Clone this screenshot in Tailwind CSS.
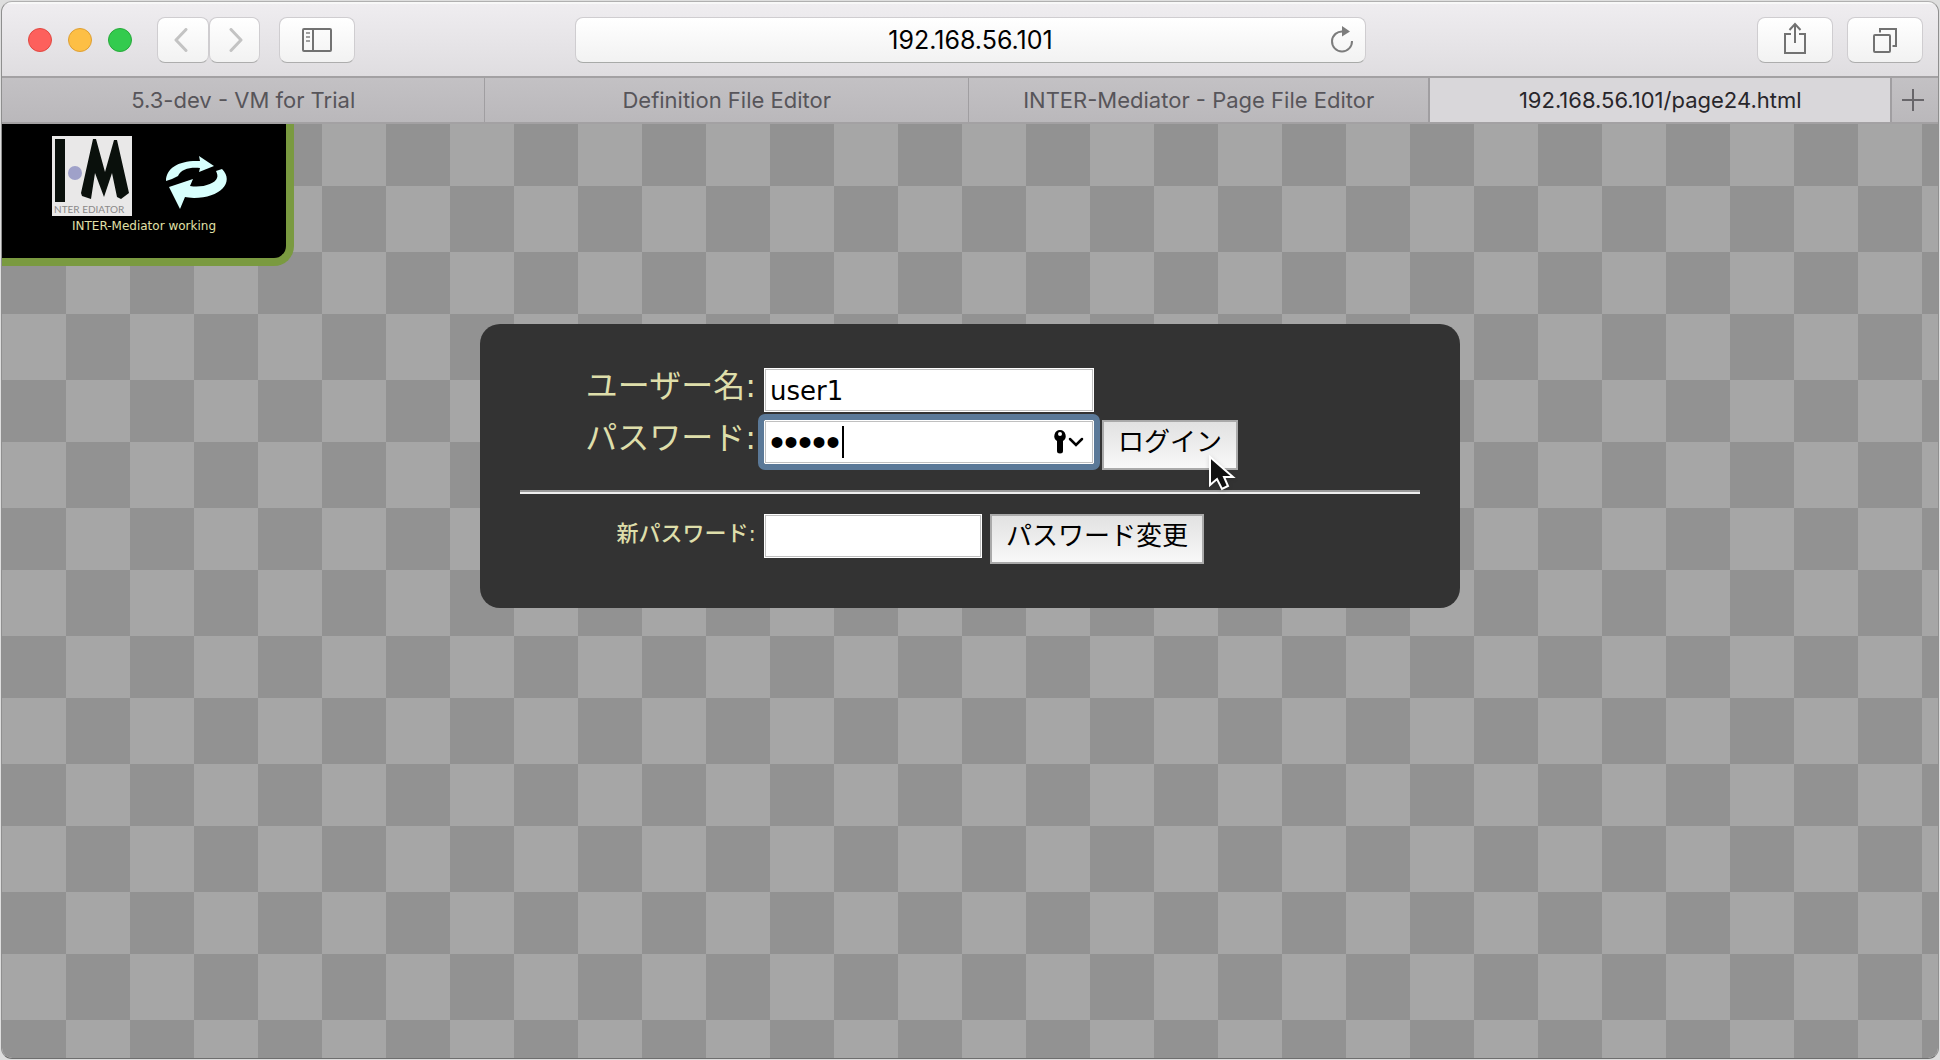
<!DOCTYPE html>
<html lang="ja">
<head>
<meta charset="utf-8">
<title>192.168.56.101/page24.html</title>
<script src="https://cdn.jsdelivr.net/npm/@tailwindcss/browser@4"></script>
</head>
<body class="min-h-screen bg-[#dedede] flex flex-col pt-px px-px pb-px">
<div class="flex-1 flex flex-col rounded-[11px] overflow-hidden border border-[#b0b0b0] border-b-[#6e6e6e] border-x-[#8f8f8f] font-['Inter',sans-serif]">

  <header class="h-[74px] border-t-2 border-[#f8f8f8] bg-linear-to-b from-[#efedf0] to-[#dfdde0] grid grid-cols-[573fr_791fr_572fr] items-center">
    <div class="flex items-center pl-[26px]">
      <div class="flex gap-4">
        <span class="size-6 rounded-full bg-[#fd605c] border border-[#e14841]"></span>
        <span class="size-6 rounded-full bg-[#fdbf45] border border-[#de9f34]"></span>
        <span class="size-6 rounded-full bg-[#33cb4e] border border-[#27a93a]"></span>
      </div>
      <div class="flex ml-[25px]">
        <button aria-label="戻る" class="w-[52px] h-[46px] rounded-lg border border-[#cfcdd0] border-b-[#adadad] bg-linear-to-b from-white to-[#f2f2f2] grid place-items-center">
          <svg class="w-4 h-6 mr-1" viewBox="0 0 16 24" fill="none" stroke="#c3c3c3" stroke-width="3" stroke-linecap="round" stroke-linejoin="round"><path d="M13 1.500 3 12l10 10.500"/></svg>
        </button>
        <button aria-label="進む" class="w-[51px] h-[46px] rounded-lg border border-[#cfcdd0] border-b-[#adadad] bg-linear-to-b from-white to-[#f2f2f2] grid place-items-center">
          <svg class="w-4 h-6" viewBox="0 0 16 24" fill="none" stroke="#c3c3c3" stroke-width="3" stroke-linecap="round" stroke-linejoin="round"><path d="M4 1.500 14 12 4 22.500"/></svg>
        </button>
      </div>
      <button aria-label="サイドバー" class="ml-[19px] w-[76px] h-[46px] rounded-lg border border-[#cfcdd0] border-b-[#adadad] bg-linear-to-b from-white to-[#f2f2f2] grid place-items-center">
        <svg class="w-[30px] h-6" viewBox="0 0 30 24" fill="none" stroke="#727272" stroke-width="2"><rect x="1" y="1" width="28" height="22" rx="1"/><path d="M11 1v22"/><path stroke="#a0a0a0" d="M4 5h4M4 9h4M4 13h4"/></svg>
      </button>
    </div>
    <div class="relative">
      <input type="text" aria-label="アドレス" value="192.168.56.101" class="block w-full h-[46px] rounded-lg border border-[#cfcdd0] border-b-[#a8aaa8] bg-linear-to-b from-white to-[#f2f2f2] text-center text-[25px] text-black outline-none">
      <button aria-label="再読み込み" class="absolute right-3 top-2"><svg class="w-6 h-7" viewBox="0 0 24 28" fill="none" stroke="#7c7c7c" stroke-width="2"><path d="M13 6.500A10 10 0 1 0 22 16"/><path d="M12 1l8 5.500-8 5z" fill="#7c7c7c" stroke="none"/></svg></button>
    </div>
    <div class="flex justify-end gap-[14px] pr-[15px]">
      <button aria-label="共有" class="w-[76px] h-[46px] rounded-lg border border-[#cfcdd0] border-b-[#adadad] bg-linear-to-b from-white to-[#f2f2f2] grid place-items-center">
        <svg class="w-6 h-8 mb-1" viewBox="0 0 24 32" fill="none" stroke="#727272" stroke-width="2"><path d="M8 12H2v19h20V12h-6M12 21V1.500M6.500 8 12 2l5.500 6"/></svg>
      </button>
      <button aria-label="タブ一覧" class="w-[76px] h-[46px] rounded-lg border border-[#cfcdd0] border-b-[#adadad] bg-linear-to-b from-white to-[#f2f2f2] grid place-items-center">
        <svg class="w-6 h-[26px]" viewBox="0 0 24 26" fill="none" stroke="#727272" stroke-width="2"><rect x="1" y="8" width="16" height="17" rx="1"/><path d="M7 5.500V2h16v17h-3.500"/></svg>
      </button>
    </div>
  </header>

  <nav class="h-12 border-y-2 border-[#a3a1a3] bg-linear-to-b from-[#c3c1c4] to-[#bab8bb] flex text-[22px] text-[#57555a]">
    <a href="#" class="flex-[484_1_0%] border-r border-[#a09ea1] flex items-center justify-center">5.3-dev - VM for Trial</a>
    <a href="#" class="flex-[484_1_0%] border-r border-[#a09ea1] flex items-center justify-center">Definition File Editor</a>
    <a href="#" class="flex-[461_1_0%] border-r-2 border-[#a09ea1] flex items-center justify-center">INTER-Mediator - Page File Editor</a>
    <a href="#" class="flex-[461_1_0%] border-r-2 border-[#a09ea1] bg-[#d9d7da] text-[#28262b] flex items-center justify-center">192.168.56.101/page24.html</a>
    <button aria-label="新しいタブ" class="w-[46px] pr-1 grid place-items-center"><svg class="size-[22px]" viewBox="0 0 22 22" stroke="#68666a" stroke-width="2"><path d="M11 0v22M0 11h22"/></svg></button>
  </nav>

  <main class="relative flex-1 pt-[200px] bg-[conic-gradient(from_0deg_at_64px_62px,#a6a6a6_25%,#929292_0_50%,#a6a6a6_0_75%,#929292_0)] bg-size-[128px_128px] font-['DejaVu_Sans','Noto_Sans_CJK_JP',sans-serif]">
    <section class="absolute left-0 top-0 w-[292px] h-[142px] bg-black border-r-8 border-b-8 border-[#7a9a40] rounded-br-[20px] pt-3">
      <div class="flex justify-center gap-6">
        <svg class="size-20" viewBox="0 0 80 80"><path fill="#e9e8e8" d="M0 0h80v80H0z"/><path fill="#0a100c" d="M3 3h10v63H3zM41 3h3l9 33 9-32h3l12 53-8 6-4-2-5-24-8 24-9-24-4 26-9-3-1-3z"/><circle cx="23" cy="37" r="7" fill="#9fa1c9"/><text x="2" y="77" font-family="Lato, sans-serif" font-size="10" fill="#8b8989">NTER EDIATOR</text></svg>
        <svg class="size-20" viewBox="0 0 80 80" fill="#d8fffd"><path d="M10 45c0-13 13-21 34-20l-1-5 15 10-15 6 1-4c-10-1-19 1-22 8-4 2-8 4-12 5zM60 35l6-2c13 13-2 29-28 29-4 0-7-1-9-1l-5 12-11-22 24-8-3 7c12 2 25-2 27-8 1-2 0-5-1-7z"/></svg>
      </div>
      <p class="text-center text-[12px] leading-5 text-[#e0e0a8]">INTER-Mediator working</p>
    </section>

    <form class="relative w-[980px] max-w-full mx-auto rounded-[20px] bg-[#333] text-[#dedeaa] px-10 py-11">
      <div class="flex items-start">
        <label for="user" class="w-[236px] text-right text-[32px] leading-9">ユーザー名:</label>
        <input id="user" type="text" value="user1" class="ml-2 w-[330px] h-11 bg-white border border-white inset-ring inset-ring-[#c0c0c0] px-[5px] pt-[2px] text-[26px] text-black">
      </div>
      <div class="flex items-start mt-2">
        <label for="pass" class="w-[236px] text-right text-[32px] leading-9">パスワード:</label>
        <div class="relative ml-2">
          <input id="pass" type="password" value="user1" class="block w-[330px] h-11 bg-white border border-white inset-ring inset-ring-[#c0c0c0] outline-6 outline-[#5b7998] rounded-[1px] px-[5px] text-[40px] font-['Liberation_Sans',sans-serif] text-black">
          <span class="absolute left-[78px] top-[6px] w-[2px] h-8 bg-black"></span>
          <svg class="absolute right-[9px] top-[9px] w-8 h-7" viewBox="0 0 32 28"><path fill="#000" fill-rule="evenodd" d="M7 1a6 6 0 0 1 3 11v10a3 2.500 0 0 1-6 0V12A6 6 0 0 1 7 1zm0 2a2 2 0 1 0 0 4 2 2 0 0 0 0-4z"/><path d="m17 10 6 6 6-6" fill="none" stroke="#000" stroke-width="2.500" stroke-linecap="round"/></svg>
        </div>
        <button type="button" class="ml-2 h-[50px] px-[14px] border-2 border-[#aaa] bg-linear-to-b from-[#e2e2e2] to-[#f8f8f8] text-[26px] leading-10 pb-[6px] text-black">ログイン</button>
        <svg class="absolute left-[728px] top-[130px] w-8 h-10 drop-shadow-sm" viewBox="0 0 32 40"><path d="M2 3v28l7-6 5 10 6-3-4-9h9z" fill="#111" stroke="#fff" stroke-width="2"/></svg>
      </div>
      <hr class="mt-5 h-1 border-0 border-t-2 border-[#999] bg-[#eee]">
      <div class="flex items-start mt-5">
        <label for="newpass" class="w-[236px] text-right text-[22px] font-medium leading-10">新パスワード:</label>
        <input id="newpass" type="password" class="ml-2 w-[218px] h-11 bg-white border border-white inset-ring inset-ring-[#c0c0c0] px-[5px] text-2xl text-black">
        <button type="button" class="ml-2 h-[50px] px-[14px] border-2 border-[#aaa] bg-linear-to-b from-[#e2e2e2] to-[#f8f8f8] text-[26px] leading-10 pb-[6px] text-black">パスワード変更</button>
      </div>
    </form>
  </main>
</div>
</body>
</html>
